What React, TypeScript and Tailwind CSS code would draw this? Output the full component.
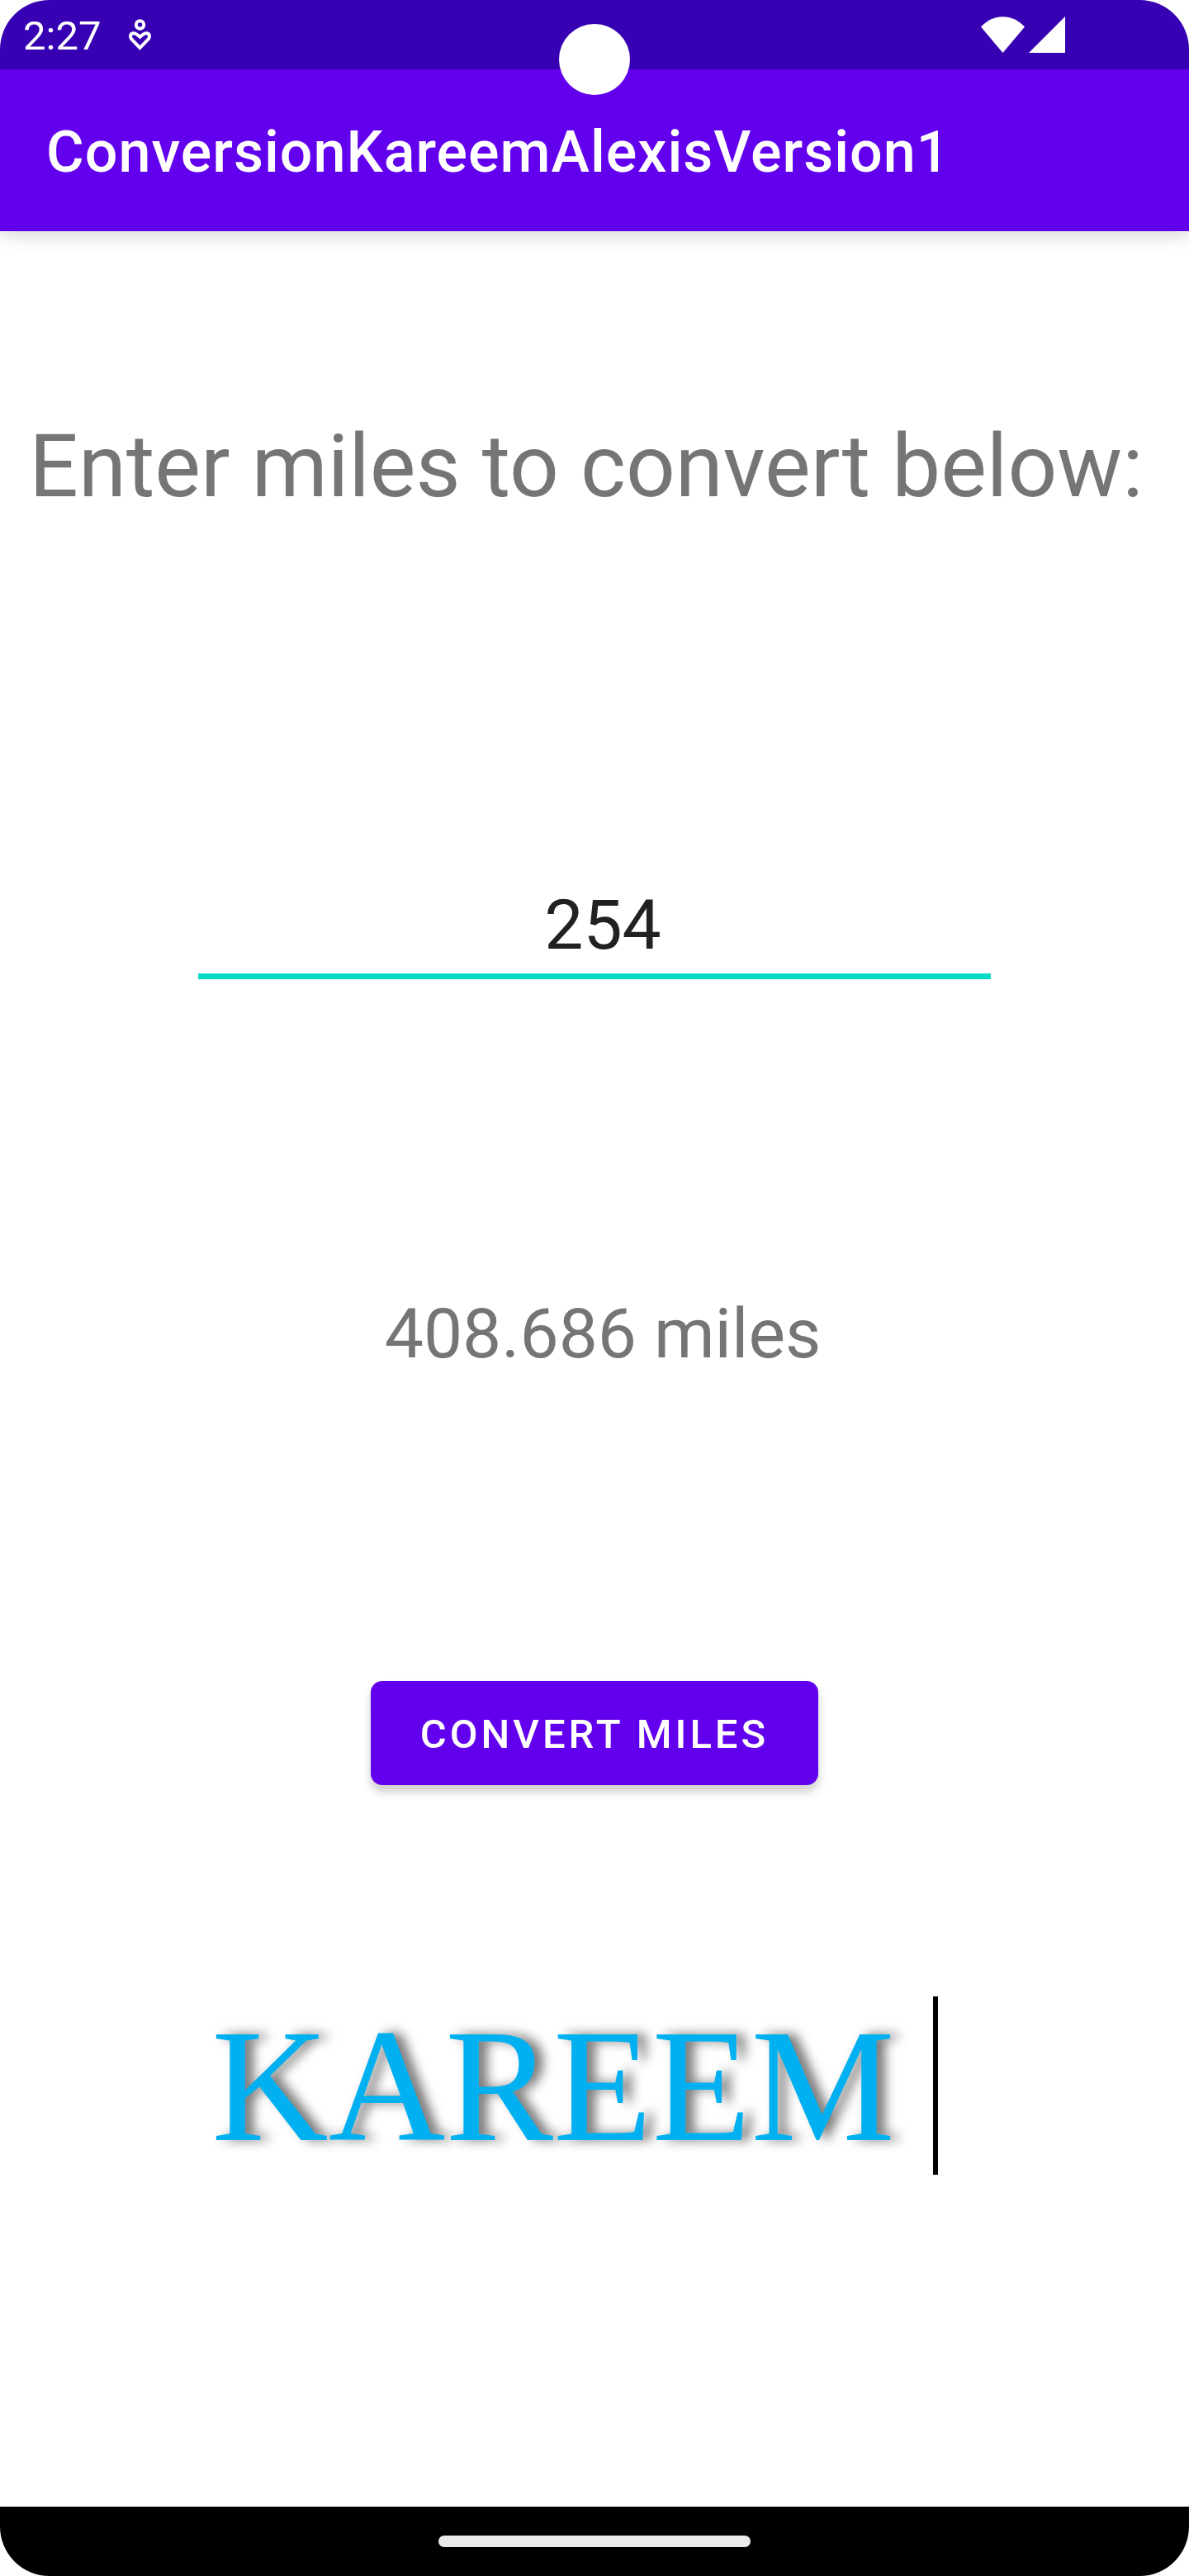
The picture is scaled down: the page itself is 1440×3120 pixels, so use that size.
import { useState } from "react";

function WellbeingIcon() {
  return (
    <svg className="h-[38px] w-[27px]" viewBox="0 0 27 38" fill="none" stroke="white" strokeWidth="4" aria-hidden="true">
      <circle cx="13.5" cy="7" r="4.7" />
      <path d="M13.5 35 L4 25.2 C1 22.2 1.4 17.8 5.2 17.2 C8.6 16.7 10.6 19 13.5 21.8 C16.4 19 18.4 16.7 21.8 17.2 C25.6 17.8 26 22.2 23 25.2 Z" />
    </svg>
  );
}

function WifiIcon() {
  return (
    <svg className="h-11 w-[53px]" viewBox="0 0 53 44" fill="white" aria-hidden="true">
      <path d="M0 12.5 C15 -4 38 -4 53 12.5 L26.5 44 Z" />
    </svg>
  );
}

function SignalIcon() {
  return (
    <svg className="h-11 w-11" viewBox="0 0 44 44" fill="white" aria-hidden="true">
      <path d="M44 0 V44 H0 Z" />
    </svg>
  );
}

function StatusBar() {
  return (
    <div className="relative flex h-[84px] items-center justify-between bg-[#3700b3] pr-[150px] pl-7">
      <div className="flex items-center gap-[34px]">
        <span className="pt-1 text-[49px] leading-[80px]">2:27</span>
        <WellbeingIcon />
      </div>
      <div className="flex items-center gap-[5px]">
        <WifiIcon />
        <SignalIcon />
      </div>
      <div className="absolute top-[29px] left-1/2 size-[86px] -translate-x-1/2 rounded-full bg-white" />
    </div>
  );
}

export default function App() {
  const [miles, setMiles] = useState("254");
  const [result, setResult] = useState("408.686 miles");

  const convert = () => setResult(`${(Number(miles) * 1.609).toFixed(3)} miles`);

  return (
    <div className="flex min-h-screen flex-col overflow-hidden rounded-[60px] bg-white font-['Roboto',sans-serif]">
      <header className="text-white shadow-[0_6px_20px_rgba(0,0,0,0.15)]">
        <StatusBar />
        <div className="flex h-[196px] items-center bg-[#6200ee] px-14 pt-1">
          <h1 className="text-[70px] leading-[96px] font-medium tracking-[1px]">ConversionKareemAlexisVersion1</h1>
        </div>
      </header>

      <main className="flex flex-1 flex-col items-center">
        <label htmlFor="miles" className="mt-[226px] pr-5 text-[105px] leading-[120px] whitespace-nowrap text-[#757575]">
          Enter miles to convert below:
        </label>
        <input
          id="miles"
          type="text"
          inputMode="decimal"
          value={miles}
          onChange={(e) => setMiles(e.target.value)}
          className="mt-[444px] h-[116px] w-2/3 border-b-[7px] border-[#03dac5] pb-2 pl-5 text-center text-[84px] leading-[100px] text-[#212121] outline-none"
        />
        <output htmlFor="miles" className="mt-[380px] pl-5 text-[84px] leading-[100px] text-[#757575]">
          {result}
        </output>
        <button
          type="button"
          onClick={convert}
          className="mt-[370px] h-[126px] rounded-[14px] bg-[#6200ee] px-[60px] pt-1 text-[49px] leading-[64px] font-medium tracking-[4px] text-white shadow-[0_8px_12px_rgba(0,0,0,0.2)]"
        >
          CONVERT MILES
        </button>
        <div className="mt-64 flex items-center gap-[46px] pr-12">
          <span className="font-['Liberation_Serif',serif] text-[196px] leading-[216px] text-[#00b0f0] [text-shadow:10px_0_14px_rgba(0,0,0,0.55)]">
            KAREEM
          </span>
          <div className="h-[216px] w-[6px] bg-black" />
        </div>
      </main>

      <footer className="flex h-[84px] items-center justify-center bg-black">
        <div className="h-[14px] w-[378px] rounded-full bg-[#ebebeb]" />
      </footer>
    </div>
  );
}
